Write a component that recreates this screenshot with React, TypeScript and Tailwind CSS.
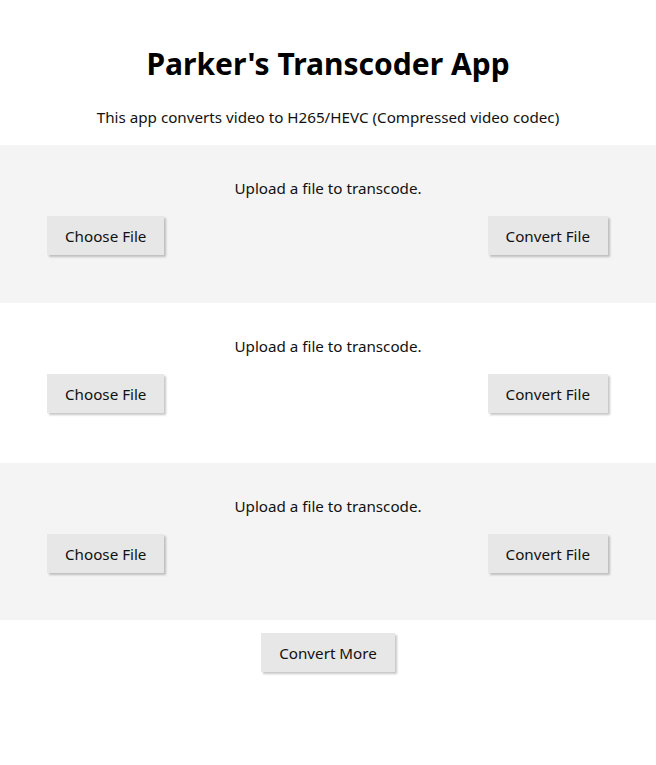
import React from "react";

function Btn({ children }: { children: React.ReactNode }) {
  return (
    <button className="h-[39px] px-[18px] pt-[2px] bg-[#e7e7e7] text-[15.2px] text-[#111] shadow-[2px_2px_2px_rgba(0,0,0,0.22)] leading-none">
      {children}
    </button>
  );
}

function Section({ gray, h }: { gray: boolean; h: string }) {
  return (
    <div className={`${gray ? "bg-[#f4f4f4]" : "bg-white"} ${h} pt-[33px] px-[47px]`}>
      <p className="text-center text-[15.2px] leading-[20px]">Upload a file to transcode.</p>
      <div className="flex justify-between mt-[18px] pr-[1px]">
        <Btn>Choose File</Btn>
        <Btn>Convert File</Btn>
      </div>
    </div>
  );
}

export default function App() {
  return (
    <div className="w-[656px] h-[765px] bg-white text-[#111]" style={{ fontFamily: "'Segoe UI', 'Noto Sans', sans-serif" }}>
      <h1 className="text-center text-[30px] font-bold pt-[44px] leading-[40px] text-black">Parker's Transcoder App</h1>
      <p className="text-center text-[15.2px] mt-[22px] leading-[22px]">This app converts video to H265/HEVC (Compressed video codec)</p>
      <div className="mt-[17px]">
        <Section gray h="h-[158px]" />
        <Section gray={false} h="h-[160px]" />
        <Section gray h="h-[157px]" />
      </div>
      <div className="flex justify-center mt-[13px]">
        <Btn>Convert More</Btn>
      </div>
    </div>
  );
}
